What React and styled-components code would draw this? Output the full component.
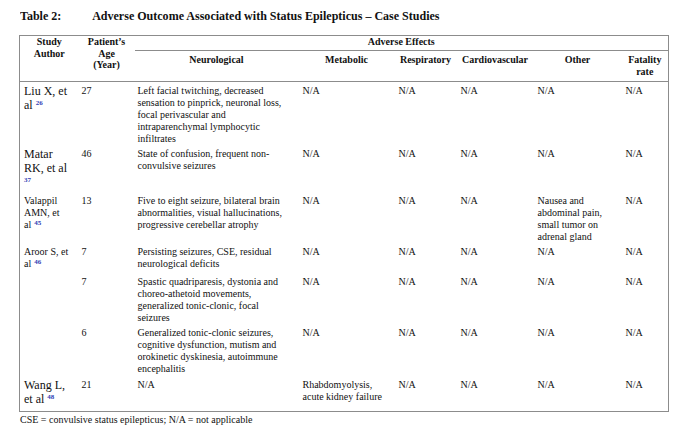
import styled, { createGlobalStyle } from 'styled-components';

const GlobalStyle = createGlobalStyle`
  html, body {
    margin: 0;
    padding: 0;
    background: #ffffff;
  }
  body {
    font-family: "Liberation Serif", "Times New Roman", serif;
    color: #111111;
  }
`;

const Page = styled.div`
  width: 684px;
  height: 429px;
  padding: 8px 0 0 19px;
  box-sizing: border-box;
`;

const Title = styled.div`
  display: flex;
  font-weight: 700;
  font-size: 13px;
  line-height: 15px;
  margin-left: 1px;
  margin-bottom: 12px;
  transform: scaleX(0.925);
  transform-origin: left center;
  white-space: nowrap;
`;

const TitleLabel = styled.span`
  width: 78px;
`;

const Table = styled.table`
  border-collapse: collapse;
  table-layout: fixed;
  width: 649px;
  border: 1px solid #8c8c8c;
  font-size: 10px;
  line-height: 12px;
`;

const Th = styled.th`
  font-weight: 700;
  text-align: center;
  vertical-align: top;
  padding: ${(p) => (p.$sub ? '3px 2px 0' : '0 2px 0')};
  line-height: 11.5px;
  border-bottom: ${(p) => (p.$line ? '1px solid #8c8c8c' : 'none')};
`;

const HeadRow = styled.tr`
  height: ${(p) => p.$h}px;
  border-bottom: ${(p) => (p.$last ? '1px solid #8c8c8c' : 'none')};
`;

const Row = styled.tr`
  height: ${(p) => p.$h}px;
`;

const Td = styled.td`
  vertical-align: top;
  padding: 3px ${(p) => p.$pr || 3}px 0 ${(p) => p.$pl || 4}px;
  font-weight: 400;
`;

const AuthorCell = styled(Td)`
  font-size: ${(p) => (p.$big ? '12px' : '10px')};
  line-height: ${(p) => (p.$big ? '14px' : '12px')};
  padding-top: ${(p) => (p.$big ? '2px' : '3px')};
  padding-right: 2px;
  white-space: nowrap;
`;

const Ref = styled.span`
  display: inline-block;
  font-size: 7px;
  line-height: 7px;
  font-weight: 700;
  color: #3040b4;
  vertical-align: top;
  margin-left: ${(p) => (p.$own ? '0' : '3px')};
  margin-top: ${(p) => (p.$big ? '2px' : '1px')};
`;

const Footnote = styled.div`
  font-size: 10px;
  line-height: 12px;
  margin-top: 2px;
  margin-left: 1px;
`;

const Author = ({ lines, refNo, big, refOwnLine }) => (
  <AuthorCell $big={big}>
    {lines.map((l, i) => (
      <span key={i}>
        {i > 0 && <br />}
        {l}
      </span>
    ))}
    {refOwnLine && <br />}
    <Ref $own={refOwnLine} $big={big}>
      {refNo}
    </Ref>
  </AuthorCell>
);

const rows = [
  {
    h: 62,
    author: { lines: ['Liu X, et', 'al'], refNo: '26', big: true },
    age: '27',
    neuro: 'Left facial twitching, decreased sensation to pinprick, neuronal loss, focal perivascular and intraparenchymal lymphocytic infiltrates',
    cells: ['N/A', 'N/A', 'N/A', 'N/A', 'N/A'],
  },
  {
    h: 47,
    author: { lines: ['Matar', 'RK, et al'], refNo: '37', big: true, refOwnLine: true },
    age: '46',
    neuro: 'State of confusion, frequent non-convulsive seizures',
    cells: ['N/A', 'N/A', 'N/A', 'N/A', 'N/A'],
  },
  {
    h: 50,
    author: { lines: ['Valappil', 'AMN, et', 'al'], refNo: '45' },
    age: '13',
    neuro: 'Five to eight seizure, bilateral brain abnormalities, visual hallucinations, progressive cerebellar atrophy',
    cells: ['N/A', 'N/A', 'N/A', 'Nausea and abdominal pain, small tumor on adrenal gland', 'N/A'],
  },
  {
    h: 30,
    author: { lines: ['Aroor S, et', 'al'], refNo: '46' },
    age: '7',
    neuro: 'Persisting seizures, CSE, residual neurological deficits',
    cells: ['N/A', 'N/A', 'N/A', 'N/A', 'N/A'],
  },
  {
    h: 51,
    age: '7',
    neuro: 'Spastic quadriparesis, dystonia and choreo-athetoid movements, generalized tonic-clonic, focal seizures',
    cells: ['N/A', 'N/A', 'N/A', 'N/A', 'N/A'],
  },
  {
    h: 52,
    age: '6',
    neuro: 'Generalized tonic-clonic seizures, cognitive dysfunction, mutism and orokinetic dyskinesia, autoimmune encephalitis',
    cells: ['N/A', 'N/A', 'N/A', 'N/A', 'N/A'],
  },
  {
    h: 35,
    author: { lines: ['Wang L,', 'et al'], refNo: '48', big: true },
    age: '21',
    neuro: 'N/A',
    cells: ['Rhabdomyolysis, acute kidney failure', 'N/A', 'N/A', 'N/A', 'N/A'],
  },
];

const App = () => (
  <>
    <GlobalStyle />
    <Page>
      <Title>
        <TitleLabel>Table 2:</TitleLabel>
        <span>Adverse Outcome Associated with Status Epilepticus – Case Studies</span>
      </Title>
      <Table>
        <colgroup>
          <col style={{ width: 59 }} />
          <col style={{ width: 56 }} />
          <col style={{ width: 164 }} />
          <col style={{ width: 96 }} />
          <col style={{ width: 62 }} />
          <col style={{ width: 77 }} />
          <col style={{ width: 88 }} />
          <col style={{ width: 47 }} />
        </colgroup>
        <thead>
          <HeadRow $h={15}>
            <Th rowSpan={2}>
              Study
              <br />
              Author
            </Th>
            <Th rowSpan={2}>
              Patient’s
              <br />
              Age
              <br />
              (Year)
            </Th>
            <Th colSpan={6} $line>
              Adverse Effects
            </Th>
          </HeadRow>
          <HeadRow $h={31} $last>
            <Th $sub>Neurological</Th>
            <Th $sub>Metabolic</Th>
            <Th $sub>Respiratory</Th>
            <Th $sub>Cardiovascular</Th>
            <Th $sub>Other</Th>
            <Th $sub>
              Fatality
              <br />
              rate
            </Th>
          </HeadRow>
        </thead>
        <tbody>
          {rows.map((r, i) => (
            <Row key={i} $h={r.h}>
              {r.author ? <Author {...r.author} /> : <Td />}
              <Td $pl={3}>{r.age}</Td>
              <Td $pl={3} $pr={10}>{r.neuro}</Td>
              {r.cells.map((c, j) => (
                <Td key={j} $pr={6}>{c}</Td>
              ))}
            </Row>
          ))}
        </tbody>
      </Table>
      <Footnote>CSE = convulsive status epilepticus; N/A = not applicable</Footnote>
    </Page>
  </>
);

export default App;
